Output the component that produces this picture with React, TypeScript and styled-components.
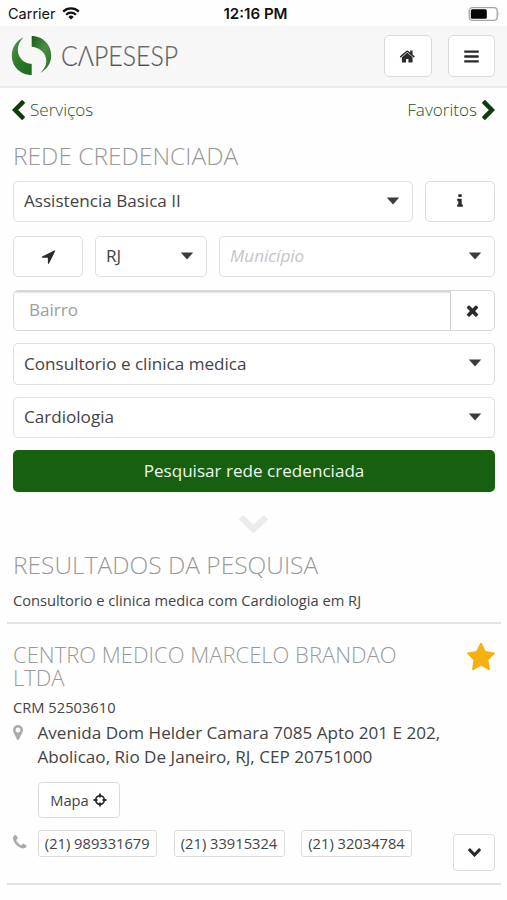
import React from "react";
import styled, { createGlobalStyle } from "styled-components";

const GlobalStyle = createGlobalStyle`
  * { box-sizing: border-box; }
  html, body { margin: 0; padding: 0; background: #fff; }
  body { font-family: "Open Sans", sans-serif; font-size: 17.1px; color: #444; }
  button, input { font: inherit; color: inherit; }
`;

const Screen = styled.div`
  width: 507px;
  height: 900px;
  overflow: hidden;
  background: #fefefe;
`;

const StatusBar = styled.div`
  height: 26px;
  display: grid;
  grid-template-columns: 1fr auto 1fr;
  align-items: center;
  padding: 1px 7px 0 8px;
  font-family: Inter, sans-serif;
  font-size: 14.5px;
  color: #111;
`;
const Carrier = styled.div`
  display: flex;
  align-items: center;
  gap: 6px;
`;
const Clock = styled.div`
  padding-left: 3px;
  font-weight: 600;
  font-size: 15.1px;
`;
const BatteryWrap = styled.div`
  display: flex;
  justify-content: flex-end;
`;

const Header = styled.header`
  height: 62px;
  background: #f7f7f7;
  border-bottom: 2px solid #ebebeb;
  display: flex;
  align-items: center;
  justify-content: space-between;
  padding: 0 12px 0 11px;
`;
const HeaderActions = styled.div`
  display: flex;
  gap: 16.5px;
`;

const Button = styled.button<{ $w: number; $h: number; $size?: number; $radius?: number }>`
  width: ${(p) => p.$w}px;
  height: ${(p) => p.$h}px;
  flex: none;
  display: inline-flex;
  align-items: center;
  justify-content: center;
  gap: 4px;
  padding: 0;
  border: 1.5px solid #dcdcdc;
  border-radius: ${(p) => p.$radius ?? 5}px;
  background: #fff;
  color: #444;
  font-size: ${(p) => p.$size ?? 17}px;
  white-space: nowrap;
`;

const NavRow = styled.nav`
  height: 45px;
  display: flex;
  align-items: center;
  justify-content: space-between;
  padding: 0 12px 2px;
`;
const NavLink = styled.a`
  display: flex;
  align-items: center;
  gap: 5px;
  font-size: 17.1px;
  font-weight: 300;
  color: #2b522b;
`;

const Title = styled.h1`
  margin: 8px 0 0 13px;
  font-size: 24.5px;
  line-height: 30px;
  font-weight: 300;
  color: #999;
`;
const ResultsTitle = styled(Title)`
  margin-top: 0;
`;

const Form = styled.form`
  margin: 9.5px 12px 0 13px;
  display: flex;
  flex-direction: column;
  gap: 12px;
`;
const FormRow = styled.div<{ $mb?: number }>`
  display: flex;
  gap: 12px;
  margin-bottom: ${(p) => p.$mb ?? 0}px;
`;
const SelectBox = styled.div<{ $w?: string; $muted?: boolean }>`
  width: ${(p) => p.$w ?? "100%"};
  flex: none;
  height: 41.5px;
  display: flex;
  align-items: center;
  justify-content: space-between;
  padding: 0 12px 1px 10px;
  border: 1.5px solid #dfdfdf;
  border-radius: 5px;
  background: #fff;
  color: ${(p) => (p.$muted ? "#c4c4c4" : "#444")};
  font-style: ${(p) => (p.$muted ? "italic" : "normal")};
  white-space: nowrap;
`;
const InputGroup = styled.div`
  height: 41.5px;
  display: flex;
  border: 1.5px solid #d8d8d8;
  border-radius: 5px;
  overflow: hidden;
  background: #fff;
`;
const TextInput = styled.input`
  flex: 1;
  min-width: 0;
  border: 0;
  border-right: 1.5px solid #cfcfcf;
  padding: 0 15px 2px;
  background: transparent;
  box-shadow: inset 0 1.5px 1px #d2d2d2;
  outline: 0;
  &::placeholder { color: #9d9d9d; opacity: 1; }
`;
const ClearButton = styled.button`
  width: 43px;
  border: 0;
  padding: 0;
  display: flex;
  align-items: center;
  justify-content: center;
  background: transparent;
`;
const SubmitButton = styled.button`
  height: 41.5px;
  border: 0;
  border-radius: 5px;
  background: #166010;
  color: #eef6ee;
  padding: 0;
`;

const Expander = styled.div`
  height: 58px;
  padding-top: 6px;
  display: flex;
  align-items: center;
  justify-content: center;
`;

const Summary = styled.p`
  margin: 10px 0 0 13px;
  font-size: 14.7px;
  line-height: 20px;
  color: #444;
`;
const Divider = styled.hr<{ $mt: number }>`
  margin: ${(p) => p.$mt}px 6px 0 7px;
  border: 0;
  height: 2px;
  background: #e2e2e2;
`;

const Result = styled.article`
  padding: 19px 12px 0 13px;
`;
const ResultHead = styled.div`
  display: flex;
  justify-content: space-between;
  align-items: flex-start;
`;
const Name = styled.h2`
  margin: 0;
  width: 400px;
  font-size: 22px;
  line-height: 23px;
  font-weight: 300;
  color: #999;
`;
const Registry = styled.div`
  margin-top: 8px;
  font-size: 14.7px;
  line-height: 20px;
`;
const Detail = styled.div<{ $mt: number }>`
  margin-top: ${(p) => p.$mt}px;
  display: flex;
  align-items: flex-start;
`;
const DetailIcon = styled.div<{ $mt: number }>`
  width: 24.5px;
  flex: none;
  display: flex;
  padding-top: ${(p) => p.$mt}px;
`;
const Address = styled.div`
  font-size: 17.1px;
  line-height: 24.5px;
  white-space: nowrap;
`;
const MapRow = styled.div`
  margin: 12px 0 0 24.5px;
  display: flex;
`;
const Phones = styled.div`
  display: flex;
  flex: 1;
  gap: 16.5px;
`;
const ToggleSlot = styled.div`
  padding-top: 4px;
`;

const FA = {
  home: "M1472 992v480q0 26-19 45t-45 19h-384v-384h-256v384h-384q-26 0-45-19t-19-45v-480q0-1 .5-3t.5-3l575-474 575 474q1 2 1 6zm223-69l-62 74q-8 9-21 11h-3q-13 0-21-7l-692-577-692 577q-12 8-24 7-13-2-21-11l-62-74q-8-10-7-23.5t11-21.5l719-599q32-26 76-26t76 26l244 204v-195q0-14 9-23t23-9h192q14 0 23 9t9 23v408l219 182q10 8 11 21.5t-7 23.5z",
  bars: "M1664 1344v128q0 26-19 45t-45 19h-1408q-26 0-45-19t-19-45v-128q0-26 19-45t45-19h1408q26 0 45 19t19 45zm0-512v128q0 26-19 45t-45 19h-1408q-26 0-45-19t-19-45v-128q0-26 19-45t45-19h1408q26 0 45 19t19 45zm0-512v128q0 26-19 45t-45 19h-1408q-26 0-45-19t-19-45v-128q0-26 19-45t45-19h1408q26 0 45 19t19 45z",
  left: "M1427 301l-531 531 531 531q19 19 19 45t-19 45l-166 166q-19 19-45 19t-45-19l-742-742q-19-19-19-45t19-45l742-742q19-19 45-19t45 19l166 166q19 19 19 45t-19 45z",
  right: "M1363 877l-742 742q-19 19-45 19t-45-19l-166-166q-19-19-19-45t19-45l531-531-531-531q-19-19-19-45t19-45l166-166q19-19 45-19t45 19l742 742q19 19 19 45t-19 45z",
  down: "M1683 808l-742 741q-19 19-45 19t-45-19l-742-741q-19-19-19-45.500t19-45.500l166-165q19-19 45-19t45 19l531 531 531-531q19-19 45-19t45 19l166 165q19 19 19 45.500t-19 45.500z",
  info: "M1216 1344v128q0 26-19 45t-45 19h-512q-26 0-45-19t-19-45v-128q0-26 19-45t45-19h64v-384h-64q-26 0-45-19t-19-45v-128q0-26 19-45t45-19h384q26 0 45 19t19 45v576h64q26 0 45 19t19 45zm-128-1152v192q0 26-19 45t-45 19h-256q-26 0-45-19t-19-45v-192q0-26 19-45t45-19h256q26 0 45 19t19 45z",
  times: "M1490 1322q0 40-28 68l-136 136q-28 28-68 28t-68-28l-294-294-294 294q-28 28-68 28t-68-28l-136-136q-28-28-28-68t28-68l294-294-294-294q-28-28-28-68t28-68l136-136q28-28 68-28t68 28l294 294 294-294q28-28 68-28t68 28l136 136q28 28 28 68t-28 68l-294 294 294 294q28 28 28 68z",
  arrow: "M1593 349l-640 1280q-17 35-57 35-5 0-15-2-22-5-35.500-22.500t-13.500-39.500v-576h-576q-22 0-39.500-13.500t-22.500-35.500 4-42 29-30l1280-640q13-7 29-7 27 0 45 19 15 14 18.500 34.500t-6.500 39.500z",
  star: "M1728 647q0 22-26 48l-363 354 86 500q1 7 1 20 0 21-10.500 35.500t-30.500 14.500q-19 0-40-12l-449-236-449 236q-22 12-40 12-21 0-31.500-14.500t-10.500-35.500q0-6 2-20l86-500-364-354q-25-27-25-48 0-37 56-46l502-73 225-455q19-41 49-41t49 41l225 455 502 73q56 9 56 46z",
  marker: "M1152 640q0-106-75-181t-181-75-181 75-75 181 75 181 181 75 181-75 75-181zm256 0q0 109-33 179l-364 774q-16 33-47.500 52t-67.500 19-67.500-19-46.500-52l-365-774q-33-70-33-179 0-212 150-362t362-150 362 150 150 362z",
  phone: "M1600 1240q0 27-10 70.500t-21 68.500q-21 50-122 106-94 51-186 51-27 0-53-3.500t-57.500-12.500-47-14.500-55.500-20.500-49-18q-98-35-175-83-127-79-264-216t-216-264q-48-77-83-175-3-9-18-49t-20.500-55.500-14.500-47-12.500-57.500-3.500-53q0-92 51-186 56-101 106-122 25-11 68.500-21t70.500-10q14 0 21 3 18 6 53 76 11 19 30 54t35 63.500 31 53.500q3 4 17.500 25t21.500 35.500 7 28.500q0 20-28.500 50t-62 55-62 53-28.500 46q0 9 5 22.500t8.500 20.500 14 24 11.500 19q76 137 174 235t235 174q2 1 19 11.500t24 14 20.500 8.500 22.500 5q18 0 46-28.500t53-62 55-62 50-28.500q14 0 28.500 7t35.500 21.500 25 17.500q25 15 53.500 31t63.500 35 54 30q70 35 76 53 3 7 3 21z",
};

type IconProps = { d: string; w: number; h: number; box?: string; color?: string };
const Icon = ({ d, w, h, box = "0 0 1792 1792", color = "#2b2b2b" }: IconProps) => (
  <svg width={w} height={h} viewBox={box} fill={color} preserveAspectRatio="none" aria-hidden="true">
    <path d={d} />
  </svg>
);

const Caret = () => (
  <svg width="14" height="8" viewBox="0 0 14 8" aria-hidden="true">
    <path d="M.8.5h12.400L7 7.500z" fill="#3c3c3c" />
  </svg>
);

const Wifi = () => (
  <svg width="18" height="13" viewBox="0 0 18 13" fill="none" stroke="#111" aria-hidden="true">
    <path d="M1.200 4.600a11.200 11.200 0 0 1 15.600 0" strokeWidth="2.300" />
    <path d="M4.100 7.700a7 7 0 0 1 9.800 0" strokeWidth="2.200" />
    <path d="M9 12.600L6.300 9.900a3.800 3.800 0 0 1 5.400 0z" fill="#111" stroke="none" />
  </svg>
);

const Battery = () => (
  <svg width="32" height="14" viewBox="0 0 32 14" aria-hidden="true">
    <rect x="1.200" y=".7" width="28" height="12.600" rx="3.200" fill="#fff" stroke="#a5a5a5" strokeWidth="1.300" />
    <rect x="2.800" y="2.300" width="16" height="9.400" rx="1.500" fill="#050505" />
    <path d="M30.600 5q1.600 2 0 4z" fill="#a5a5a5" />
  </svg>
);

const Crosshair = () => (
  <svg width="14" height="14" viewBox="0 0 14 14" fill="none" stroke="#2b2b2b" aria-hidden="true">
    <circle cx="7" cy="7" r="4.300" strokeWidth="1.700" />
    <path d="M7 .5v4M7 9.500v4M.5 7h4M9.500 7h4" strokeWidth="1.900" />
  </svg>
);

const Logo = () => (
  <svg width="180" height="42" viewBox="0 0 180 42" overflow="visible" role="img" aria-label="CAPESESP">
    <defs>
      <linearGradient id="leafLeft" x1="0" y1="0" x2="1" y2="1">
        <stop offset="0" stopColor="#5c9b57" />
        <stop offset=".45" stopColor="#2d7a2a" />
        <stop offset="1" stopColor="#1d6a1a" />
      </linearGradient>
      <linearGradient id="leafRight" x1="0" y1="0" x2="1" y2="1">
        <stop offset="0" stopColor="#155c14" />
        <stop offset=".5" stopColor="#4c8f47" />
        <stop offset="1" stopColor="#1e691b" />
      </linearGradient>
      <linearGradient id="word" x1="0" y1="0" x2="0" y2="1">
        <stop offset="0" stopColor="#777" />
        <stop offset="1" stopColor="#444" />
      </linearGradient>
    </defs>
    <path d="M12.500 2.400C5.200 5.500.8 12.500.8 20.500.8 31.500 9.500 40 20.700 40V29C13 28.500 6.800 23 6.800 14.800 6.800 9.500 9 5.500 12.500 2.400z" fill="url(#leafLeft)" />
    <path d="M20.700 1C31.800 1 40.200 9.800 40.200 20.300c0 8-4.200 14.200-11 17.700 3.700-3.500 6.100-7 6.100-12 0-7.800-6.500-13.600-14.600-14.300z" fill="url(#leafRight)" />
    <text x="50" y="31" fontFamily="Lato, sans-serif" fontWeight="300" fontSize="26.5" textLength="117" lengthAdjust="spacingAndGlyphs" fill="url(#word)" stroke="#666" strokeWidth=".2">
      CΛPESESP
    </text>
  </svg>
);

const phones: [string, number][] = [
  ["(21) 989331679", 119.5],
  ["(21) 33915324", 111],
  ["(21) 32034784", 111],
];

export default function App() {
  return (
    <Screen>
      <GlobalStyle />
      <StatusBar>
        <Carrier>
          Carrier
          <Wifi />
        </Carrier>
        <Clock>12:16 PM</Clock>
        <BatteryWrap>
          <Battery />
        </BatteryWrap>
      </StatusBar>

      <Header>
        <Logo />
        <HeaderActions>
          <Button type="button" $w={48} $h={41.5} aria-label="Início">
            <Icon d={FA.home} w={16.5} h={17} />
          </Button>
          <Button type="button" $w={47} $h={41.5} aria-label="Menu">
            <Icon d={FA.bars} w={17} h={17} />
          </Button>
        </HeaderActions>
      </Header>

      <NavRow>
        <NavLink>
          <Icon d={FA.left} w={13} h={20} box="390 20 1060 1624" color="#0e3c0b" />
          Serviços
        </NavLink>
        <NavLink>
          Favoritos
          <Icon d={FA.right} w={13} h={20} box="340 20 1060 1624" color="#0e3c0b" />
        </NavLink>
      </NavRow>

      <Title>REDE CREDENCIADA</Title>

      <Form onSubmit={(e) => e.preventDefault()}>
        <FormRow $mb={1.5}>
          <SelectBox $w="400px">
            Assistencia Basica II
            <Caret />
          </SelectBox>
          <Button type="button" $w={70} $h={41.5} aria-label="Informações">
            <Icon d={FA.info} w={16} h={16} />
          </Button>
        </FormRow>
        <FormRow $mb={0.5}>
          <Button type="button" $w={70} $h={41.5} aria-label="Localização">
            <Icon d={FA.arrow} w={17} h={17} />
          </Button>
          <SelectBox $w="112px">
            RJ
            <Caret />
          </SelectBox>
          <SelectBox $w="276px" $muted>
            Município
            <Caret />
          </SelectBox>
        </FormRow>
        <InputGroup>
          <TextInput placeholder="Bairro" />
          <ClearButton type="button" aria-label="Limpar">
            <Icon d={FA.times} w={17} h={17} />
          </ClearButton>
        </InputGroup>
        <SelectBox>
          Consultorio e clinica medica
          <Caret />
        </SelectBox>
        <SelectBox>
          Cardiologia
          <Caret />
        </SelectBox>
        <SubmitButton type="submit">Pesquisar rede credenciada</SubmitButton>
      </Form>

      <Expander>
        <Icon d={FA.down} w={29} h={18} box="90 510 1612 1058" color="#ececec" />
      </Expander>

      <ResultsTitle as="h2">RESULTADOS DA PESQUISA</ResultsTitle>
      <Summary>Consultorio e clinica medica com Cardiologia em RJ</Summary>
      <Divider $mt={12} />

      <Result>
        <ResultHead>
          <Name>CENTRO MEDICO MARCELO BRANDAO LTDA</Name>
          <Icon d={FA.star} w={28} h={28} box="64 64 1664 1600" color="#f6b10f" />
        </ResultHead>
        <Registry>CRM 52503610</Registry>
        <Detail $mt={4}>
          <DetailIcon $mt={4}>
            <Icon d={FA.marker} w={10} h={15} box="384 128 1024 1536" color="#aaa" />
          </DetailIcon>
          <Address>
            Avenida Dom Helder Camara 7085 Apto 201 E 202,
            <br />
            Abolicao, Rio De Janeiro, RJ, CEP 20751000
          </Address>
        </Detail>
        <MapRow>
          <Button type="button" $w={82} $h={36.5} $size={14.7} $radius={4}>
            Mapa <Crosshair />
          </Button>
        </MapRow>
        <Detail $mt={12}>
          <DetailIcon $mt={5}>
            <Icon d={FA.phone} w={13.5} h={13.5} box="192 128 1408 1408" color="#aaa" />
          </DetailIcon>
          <Phones>
            {phones.map(([number, width]) => (
              <Button key={number} type="button" $w={width} $h={26.5} $size={14.7} $radius={3}>
                {number}
              </Button>
            ))}
          </Phones>
          <ToggleSlot>
            <Button type="button" $w={42} $h={37} $radius={4} aria-label="Mais detalhes">
              <Icon d={FA.down} w={13} h={9} box="90 510 1612 1058" />
            </Button>
          </ToggleSlot>
        </Detail>
      </Result>
      <Divider $mt={12} />
    </Screen>
  );
}
